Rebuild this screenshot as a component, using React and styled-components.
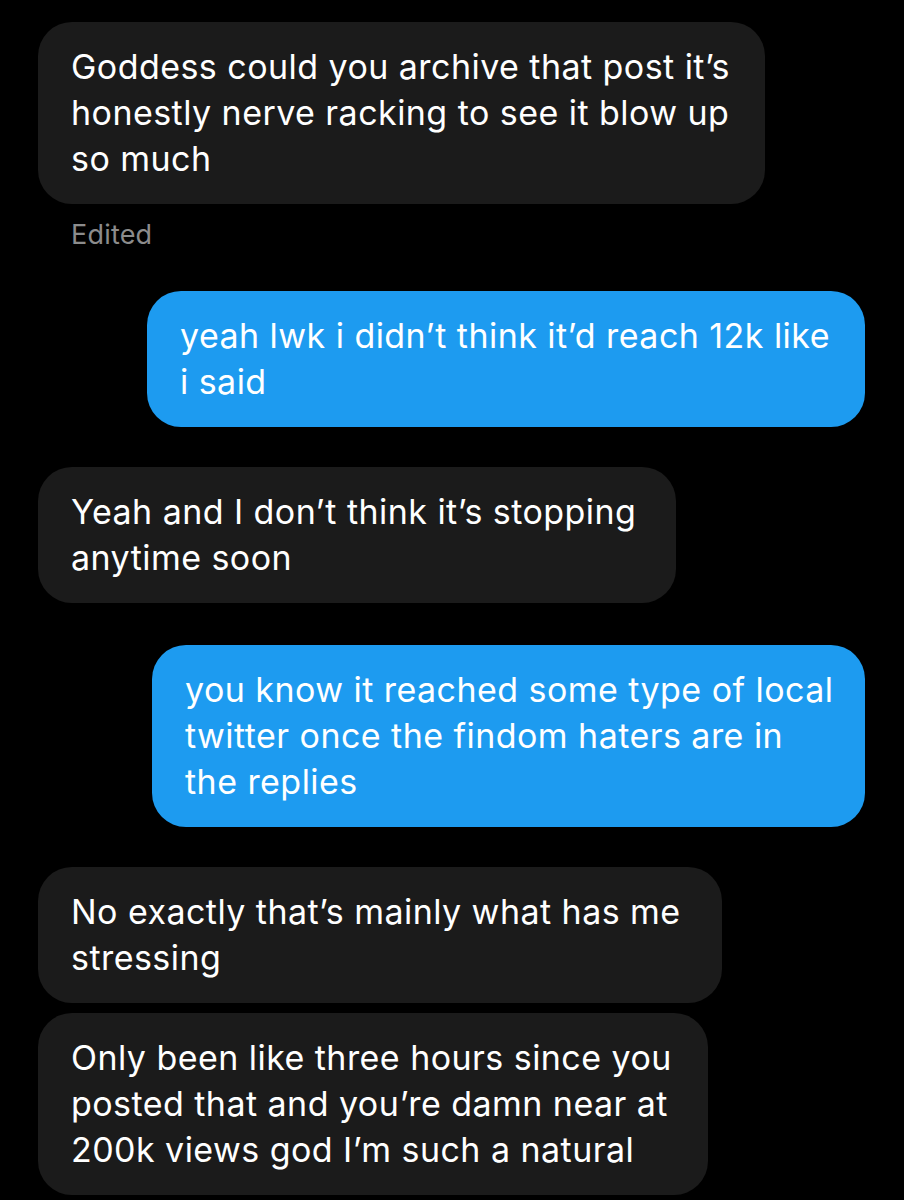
import styled, { createGlobalStyle } from 'styled-components'

const GlobalStyle = createGlobalStyle`
    html, body {
        margin: 0;
        padding: 0;
        background: #000;
    }
    body {
        font-family: Inter, "Noto Sans", "Liberation Sans", sans-serif;
        -webkit-font-smoothing: antialiased;
    }
`

const Thread = styled.div`
    width: 904px;
    height: 1200px;
    overflow: hidden;
    background: #000;
    display: flex;
    flex-direction: column;
    padding-top: 22px;
    box-sizing: border-box;
`

const Row = styled.div`
    display: flex;
    flex-direction: column;
    align-items: ${p => p.$mine ? 'flex-end' : 'flex-start'};
    padding: 0 ${p => p.$mine ? '39px' : '0'} 0 ${p => p.$mine ? '0' : '38px'};
    margin-top: ${p => p.$gap || 0}px;
`

const Bubble = styled.div`
    box-sizing: border-box;
    width: ${p => p.$width}px;
    padding: 22px 20px 22px 33px;
    border-radius: 34px;
    background: ${p => p.$mine ? '#1d9bf0' : '#1b1b1b'};
    color: #fff;
    font-size: 34px;
    line-height: 46px;
    letter-spacing: 0.45px;
`

const Line = styled.div`
    white-space: nowrap;
`

const Note = styled.div`
    margin: 14px 0 0 33px;
    color: #8c8c8c;
    font-size: 27px;
    line-height: 34px;
    letter-spacing: 0.2px;
`

const messages = [
    { mine: false, width: 727, gap: 0, lines: ['Goddess could you archive that post it\u2019s', 'honestly nerve racking to see it blow up', 'so much'], note: 'Edited' },
    { mine: true, width: 718, gap: 39, lines: ['yeah lwk i didn\u2019t think it\u2019d reach 12k like', 'i said'] },
    { mine: false, width: 638, gap: 40, lines: ['Yeah and I don\u2019t think it\u2019s stopping', 'anytime soon'] },
    { mine: true, width: 713, gap: 42, lines: ['you know it reached some type of local', 'twitter once the findom haters are in', 'the replies'] },
    { mine: false, width: 684, gap: 40, lines: ['No exactly that\u2019s mainly what has me', 'stressing'] },
    { mine: false, width: 670, gap: 10, lines: ['Only been like three hours since you', 'posted that and you\u2019re damn near at', '200k views god I\u2019m such a natural'] },
]

export default function App() {
    return <>
        <GlobalStyle />
        <Thread>
            {messages.map((m, i) =>
                <Row key={i} $mine={m.mine} $gap={m.gap}>
                    <Bubble $mine={m.mine} $width={m.width}>
                        {m.lines.map((l, j) => <Line key={j}>{l}</Line>)}
                    </Bubble>
                    {m.note && <Note>{m.note}</Note>}
                </Row>
            )}
        </Thread>
    </>
}
